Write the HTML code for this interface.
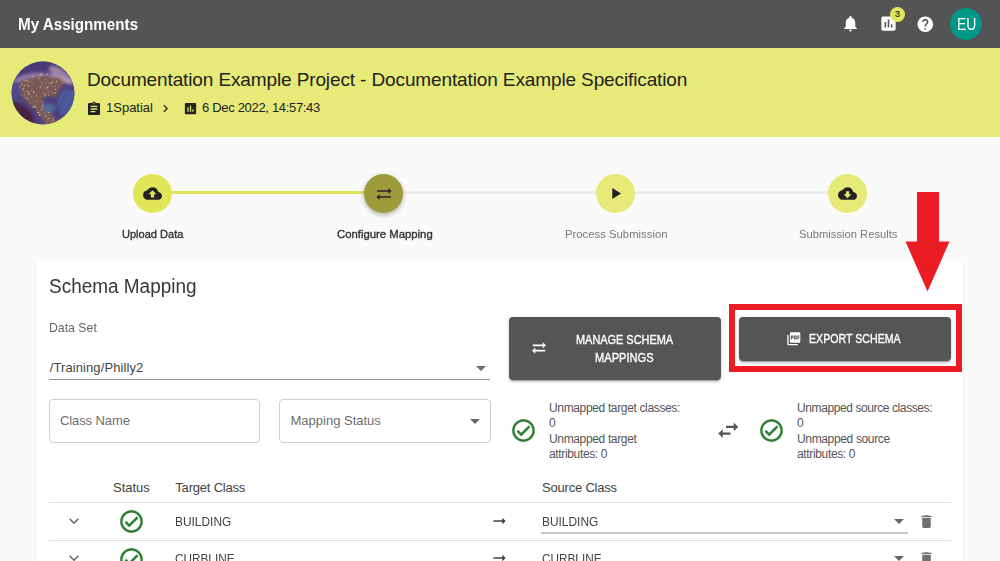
<!DOCTYPE html>
<html><head><meta charset="utf-8">
<style>
*{box-sizing:border-box;margin:0;padding:0}
html,body{width:1000px;height:561px;overflow:hidden;background:#fafafa;font-family:"Liberation Sans",sans-serif;position:relative}
.abs{position:absolute;white-space:nowrap;line-height:1}
svg{display:block}
#top{left:0;top:0;width:1000px;height:48px;background:#545454}
#band{left:0;top:48px;width:1000px;height:88.5px;background:#e6ea78}
#globe{left:11px;top:61px;width:63px;height:63px;border-radius:50%;overflow:hidden;background:radial-gradient(ellipse at 40% 45%,#8a6a5a 0%,#6e4e5e 30%,#4e3a6a 60%,#3a3270 85%,#7a6aa0 100%)}
.step{width:39px;height:39px;border-radius:50%;background:#e6ea78}
.t12{font-size:12px}
.t13{font-size:13px}
.btn{background:#555;border-radius:4px;box-shadow:0 3px 1px -2px rgba(0,0,0,.2),0 2px 2px 0 rgba(0,0,0,.14),0 1px 5px 0 rgba(0,0,0,.12)}
.bt{color:#fff;font-size:12px}
.med{-webkit-text-stroke-width:0.35px;transform-origin:0 0}
.st{font-size:12px;color:#555;letter-spacing:-0.35px}
</style></head><body>
<div id="top" class="abs"></div>
<div class="abs" style="left:17.5px;top:16px;color:#fff;font-size:17px;font-weight:bold;transform:scaleX(0.893);transform-origin:0 0">My Assignments</div>

<!-- top icons -->
<svg class="abs" style="left:841px;top:14px" width="19" height="19" viewBox="0 0 24 24"><path fill="#fff" d="M12 22c1.1 0 2-.9 2-2h-4c0 1.1.89 2 2 2zm6-6v-5c0-3.07-1.64-5.64-4.5-6.32V4c0-.83-.67-1.5-1.5-1.5s-1.5.67-1.5 1.5v.68C7.63 5.36 6 7.92 6 11v5l-2 2v1h16v-1l-2-2z"/></svg>
<svg class="abs" style="left:878.5px;top:13.5px" width="19" height="19" viewBox="0 0 24 24"><path fill="#fff" d="M19 3H5c-1.1 0-2 .9-2 2v14c0 1.1.9 2 2 2h14c1.1 0 2-.9 2-2V5c0-1.1-.9-2-2-2zM9 17H7v-7h2v7zm4 0h-2V7h2v10zm4 0h-2v-4h2v4z"/></svg>
<div class="abs" style="left:890px;top:7px;width:15px;height:15px;border-radius:50%;background:#e2e65c"></div>
<div class="abs" style="left:890px;top:10px;width:15px;text-align:center;font-size:9px;color:#222;-webkit-text-stroke-width:0.2px">3</div>
<svg class="abs" style="left:916.2px;top:14.6px" width="18.6" height="18.6" viewBox="0 0 24 24"><path fill="#fff" d="M12 2C6.48 2 2 6.48 2 12s4.48 10 10 10 10-4.48 10-10S17.52 2 12 2zm1 17h-2v-2h2v2zm2.07-7.750l-.9.92C13.45 12.9 13 13.5 13 15h-2v-.5c0-1.1.45-2.1 1.17-2.83l1.24-1.26c.37-.36.59-.86.59-1.41 0-1.1-.9-2-2-2s-2 .9-2 2H8c0-2.21 1.79-4 4-4s4 1.790 4 4c0 .88-.36 1.68-.93 2.25z"/></svg>
<div class="abs" style="left:950px;top:8px;width:32px;height:32px;border-radius:50%;background:#009688"></div>
<div class="abs" style="left:957px;top:17px;font-size:16px;color:#fff;transform:scaleX(0.87);transform-origin:0 0">EU</div>

<div id="band" class="abs"></div>
<svg class="abs" style="left:11px;top:61px" width="64" height="64" viewBox="0 0 64 64">
<defs><clipPath id="gc"><circle cx="32" cy="32" r="31.5"/></clipPath>
<filter id="gf" x="-50%" y="-50%" width="200%" height="200%"><feGaussianBlur stdDeviation="1.8"/></filter>
<filter id="gf2" x="-50%" y="-50%" width="200%" height="200%"><feGaussianBlur stdDeviation="0.35"/></filter></defs>
<g clip-path="url(#gc)">
<rect width="64" height="64" fill="#4c3f7e"/>
<g filter="url(#gf)">
<ellipse cx="26" cy="2" rx="34" ry="9" fill="#4a3a7a"/>
<path d="M-2 24 Q24 6 62 22" stroke="#9a7aaa" stroke-width="5" fill="none"/>
<ellipse cx="50" cy="14" rx="14" ry="5" transform="rotate(35 50 14)" fill="#c0a0b8" opacity="0.7"/>
<ellipse cx="8" cy="55" rx="18" ry="11" transform="rotate(40 8 55)" fill="#4a2442"/>
<path d="M11 19 L32 14 L49 17 L54 22 L47 30 L45 37 L38 35 L31 38 L34 45 L38 50 L43 55 L45 64 L36 66 L28 54 L23 47 L16 42 L10 34 L8 27Z" fill="#7a5a56"/>
<ellipse cx="57" cy="42" rx="10" ry="14" fill="#4a5898"/>
<ellipse cx="38" cy="47" rx="6" ry="4.5" fill="#4e6a98"/>
<ellipse cx="4" cy="30" rx="5" ry="10" fill="#4e4a8c"/>
</g>
<g filter="url(#gf2)" fill="#f0d098" opacity="0.75"><circle cx="29.3" cy="40.0" r="0.41"/><circle cx="31.9" cy="41.4" r="0.55"/><circle cx="16.7" cy="37.6" r="0.72"/><circle cx="37.6" cy="51.6" r="0.76"/><circle cx="12.4" cy="27.2" r="0.56"/><circle cx="40.6" cy="14.1" r="0.49"/><circle cx="32.8" cy="15.0" r="0.44"/><circle cx="16.9" cy="24.1" r="0.63"/><circle cx="28.7" cy="54.1" r="0.77"/><circle cx="32.4" cy="44.0" r="0.41"/><circle cx="31.5" cy="45.1" r="0.70"/><circle cx="29.5" cy="25.9" r="0.36"/><circle cx="22.8" cy="23.5" r="0.44"/><circle cx="21.6" cy="15.5" r="0.45"/><circle cx="44.0" cy="32.0" r="0.66"/><circle cx="44.6" cy="25.5" r="0.49"/><circle cx="12.1" cy="28.6" r="0.51"/><circle cx="13.5" cy="24.3" r="0.63"/><circle cx="45.5" cy="20.9" r="0.40"/><circle cx="34.3" cy="34.4" r="0.68"/><circle cx="13.5" cy="33.0" r="0.41"/><circle cx="18.0" cy="25.5" r="0.58"/><circle cx="17.9" cy="31.7" r="0.46"/><circle cx="18.0" cy="24.9" r="0.44"/><circle cx="44.3" cy="28.4" r="0.59"/><circle cx="21.9" cy="15.7" r="0.55"/><circle cx="19.4" cy="42.1" r="0.52"/><circle cx="25.5" cy="34.7" r="0.54"/><circle cx="35.0" cy="55.3" r="0.59"/><circle cx="16.6" cy="19.7" r="0.42"/><circle cx="19.7" cy="21.5" r="0.44"/><circle cx="42.8" cy="59.0" r="0.63"/><circle cx="27.8" cy="17.2" r="0.64"/><circle cx="36.0" cy="26.7" r="0.59"/><circle cx="11.2" cy="23.4" r="0.73"/><circle cx="34.3" cy="54.6" r="0.63"/><circle cx="36.9" cy="26.0" r="0.74"/><circle cx="51.1" cy="22.2" r="0.45"/><circle cx="8.8" cy="25.5" r="0.68"/><circle cx="28.9" cy="15.0" r="0.71"/><circle cx="16.3" cy="30.4" r="0.76"/><circle cx="34.9" cy="18.6" r="0.49"/><circle cx="40.9" cy="60.1" r="0.49"/><circle cx="30.7" cy="48.5" r="0.77"/><circle cx="42.6" cy="57.0" r="0.45"/><circle cx="24.5" cy="46.3" r="0.80"/><circle cx="27.6" cy="51.5" r="0.75"/><circle cx="37.4" cy="31.1" r="0.41"/><circle cx="42.2" cy="31.4" r="0.46"/><circle cx="28.7" cy="53.9" r="0.68"/><circle cx="30.6" cy="23.5" r="0.47"/><circle cx="36.9" cy="58.0" r="0.39"/><circle cx="22.1" cy="45.9" r="0.72"/><circle cx="17.5" cy="20.5" r="0.54"/><circle cx="23.4" cy="45.3" r="0.71"/><circle cx="17.3" cy="33.5" r="0.41"/><circle cx="35.4" cy="27.8" r="0.53"/><circle cx="14.4" cy="36.8" r="0.66"/><circle cx="41.4" cy="59.5" r="0.36"/><circle cx="21.0" cy="20.5" r="0.44"/><circle cx="29.2" cy="25.8" r="0.66"/><circle cx="18.1" cy="32.7" r="0.76"/><circle cx="29.4" cy="13.2" r="0.79"/><circle cx="47.0" cy="23.9" r="0.40"/><circle cx="37.6" cy="34.3" r="0.58"/><circle cx="40.2" cy="22.0" r="0.69"/><circle cx="30.3" cy="20.9" r="0.58"/><circle cx="41.6" cy="21.0" r="0.66"/><circle cx="20.8" cy="29.3" r="0.44"/><circle cx="36.9" cy="49.8" r="0.38"/><circle cx="26.5" cy="51.6" r="0.40"/><circle cx="14.1" cy="34.7" r="0.37"/><circle cx="37.4" cy="57.5" r="0.60"/><circle cx="25.7" cy="40.4" r="0.58"/><circle cx="38.6" cy="22.2" r="0.61"/><circle cx="33.2" cy="51.5" r="0.42"/><circle cx="11.9" cy="34.0" r="0.43"/><circle cx="33.9" cy="50.4" r="0.44"/><circle cx="30.9" cy="13.4" r="0.73"/><circle cx="45.6" cy="20.6" r="0.80"/><circle cx="14.6" cy="19.4" r="0.77"/><circle cx="32.3" cy="48.2" r="0.39"/><circle cx="18.4" cy="38.3" r="0.38"/><circle cx="22.6" cy="31.1" r="0.78"/><circle cx="34.9" cy="22.0" r="0.56"/><circle cx="36.4" cy="13.4" r="0.69"/><circle cx="26.8" cy="52.1" r="0.50"/><circle cx="40.5" cy="15.3" r="0.56"/><circle cx="33.3" cy="32.7" r="0.58"/><circle cx="20.7" cy="35.7" r="0.54"/></g>
<g stroke="#f0d0c8" stroke-width="0.35" opacity="0.3" fill="none">
<path d="M34 64 L62 16"/><path d="M44 64 L64 28"/>
</g>
</g></svg>
<div class="abs" style="left:87px;top:70px;font-size:19px;color:#222;letter-spacing:-0.12px">Documentation Example Project - Documentation Example Specification</div>
<svg class="abs" style="left:86px;top:100.7px" width="16" height="16" viewBox="0 0 24 24"><path fill="#222" d="M19 3h-4.18C14.4 1.840 13.3 1 12 1c-1.3 0-2.4.84-2.82 2H5c-1.1 0-2 .9-2 2v14c0 1.1.9 2 2 2h14c1.1 0 2-.9 2-2V5c0-1.1-.9-2-2-2zm-7 0c.55 0 1 .45 1 1s-.45 1-1 1-1-.45-1-1 .45-1 1-1zm2 14H7v-2h7v2zm3-4H7v-2h10v2zm0-4H7V7h10v2z"/></svg>
<div class="abs t13" style="left:106px;top:101px;color:#222">1Spatial</div>
<svg class="abs" style="left:158px;top:101px" width="15" height="15" viewBox="0 0 24 24"><path fill="#222" d="M10 6L8.59 7.41 13.17 12l-4.58 4.59L10 18l6-6z"/></svg>
<svg class="abs" style="left:183px;top:101px" width="15" height="15" viewBox="0 0 24 24"><path fill="#222" d="M19 3H5c-1.1 0-2 .9-2 2v14c0 1.1.9 2 2 2h14c1.1 0 2-.9 2-2V5c0-1.1-.9-2-2-2zM9 17H7v-7h2v7zm4 0h-2V7h2v10zm4 0h-2v-4h2v4z"/></svg>
<div class="abs t13" style="left:202px;top:101px;color:#222;letter-spacing:-0.32px">6 Dec 2022, 14:57:43</div>

<!-- stepper -->
<div class="abs" style="left:152px;top:191px;width:232px;height:3px;background:#e1e658"></div>
<div class="abs" style="left:384px;top:191px;width:463px;height:3px;background:#ebebf0"></div>
<div class="abs step" style="left:133px;top:174px;background:#e1e658"></div>
<svg class="abs" style="left:143px;top:184px" width="19" height="19" viewBox="0 0 24 24"><path fill="#222" d="M19.35 10.04C18.67 6.59 15.64 4 12 4 9.11 4 6.6 5.64 5.35 8.04 2.34 8.36 0 10.91 0 14c0 3.31 2.69 6 6 6h13c2.76 0 5-2.24 5-5 0-2.64-2.05-4.78-4.65-4.96zM14 13v4h-4v-4H7l5-5 5 5h-3z"/></svg>
<div class="abs step" style="left:364px;top:174px;background:#9c9c3c;box-shadow:0 2px 5px rgba(0,0,0,.3)"></div>
<svg class="abs" style="left:375px;top:184.5px" width="18" height="18" viewBox="0 0 24 24"><path fill="#222" d="M18 12l4-4-4-4v3H3v2h15zM6 12l-4 4 4 4v-3h15v-2H6z"/></svg>
<div class="abs step" style="left:596px;top:174px"></div>
<svg class="abs" style="left:605.8px;top:184px" width="19" height="19" viewBox="0 0 24 24"><path fill="#222" d="M8 5v14l11-7z"/></svg>
<div class="abs step" style="left:828px;top:174px"></div>
<svg class="abs" style="left:838px;top:184px" width="19" height="19" viewBox="0 0 24 24"><path fill="#222" d="M19.35 10.04C18.67 6.59 15.64 4 12 4 9.11 4 6.6 5.64 5.35 8.04 2.34 8.36 0 10.91 0 14c0 3.31 2.69 6 6 6h13c2.76 0 5-2.24 5-5 0-2.64-2.05-4.78-4.65-4.96zM17 13l-5 5-5-5h3V9h4v4h3z"/></svg>
<div class="abs med" style="left:121.5px;top:229.3px;font-size:11.5px;color:#333;transform:scaleX(0.96)">Upload Data</div>
<div class="abs med" style="left:336.5px;top:229.3px;font-size:11.5px;color:#333;transform:scaleX(0.985)">Configure Mapping</div>
<div class="abs" style="left:565px;top:229.3px;font-size:11.5px;color:#777;transform:scaleX(0.984);transform-origin:0 0">Process Submission</div>
<div class="abs" style="left:798.5px;top:229.3px;font-size:11.5px;color:#777;transform:scaleX(0.975);transform-origin:0 0">Submission Results</div>

<!-- card -->
<div class="abs" style="left:36px;top:260px;width:927px;height:320px;background:#fff;border-radius:4px;box-shadow:0 2px 1px -1px rgba(0,0,0,.12),0 1px 1px 0 rgba(0,0,0,.08),0 1px 3px 0 rgba(0,0,0,.08)"></div>
<div class="abs" style="left:49px;top:276px;font-size:20px;color:#383838;transform:scaleX(0.948);transform-origin:0 0">Schema Mapping</div>
<div class="abs t13" style="left:49px;top:320.5px;color:#666;transform:scaleX(0.945);transform-origin:0 0">Data Set</div>
<div class="abs t13" style="left:49.7px;top:360.5px;color:#444;letter-spacing:0.1px">/Training/Philly2</div>
<svg class="abs" style="left:469px;top:356px" width="24" height="24" viewBox="0 0 24 24"><path fill="#6a6a6a" d="M7 10l5 5 5-5z"/></svg>
<div class="abs" style="left:49px;top:379px;width:441px;height:1px;background:#939393"></div>

<div class="abs" style="left:49px;top:399px;width:211px;height:44px;border:1px solid #cfcfcf;border-radius:4px"></div>
<div class="abs t13" style="left:60px;top:413.7px;color:#6e6e6e;letter-spacing:-0.1px">Class Name</div>
<div class="abs" style="left:279px;top:399px;width:212px;height:44px;border:1px solid #cfcfcf;border-radius:4px"></div>
<div class="abs t13" style="left:290.5px;top:413.7px;color:#6e6e6e">Mapping Status</div>
<svg class="abs" style="left:463px;top:409px" width="24" height="24" viewBox="0 0 24 24"><path fill="#666" d="M7 10l5 5 5-5z"/></svg>

<div class="abs btn" style="left:509px;top:317px;width:212px;height:63px"></div>
<svg class="abs" style="left:531px;top:340.4px" width="16" height="16" viewBox="0 0 24 24"><path fill="#fff" stroke="#fff" stroke-width="0.7" d="M18 12l4-4-4-4v3H3v2h15zM6 12l-4 4 4 4v-3h15v-2H6z"/></svg>
<div class="abs bt med" style="left:576px;top:333.5px;transform:scaleX(0.91)">MANAGE SCHEMA</div>
<div class="abs bt med" style="left:595px;top:351.7px;transform:scaleX(0.925)">MAPPINGS</div>

<div class="abs btn" style="left:739px;top:317px;width:211.5px;height:43.5px"></div>
<svg class="abs" style="left:786.3px;top:330.6px" width="15.6" height="15.6" viewBox="0 0 24 24"><path fill="#fff" d="M20 2H8c-1.1 0-2 .9-2 2v12c0 1.1.9 2 2 2h12c1.1 0 2-.9 2-2V4c0-1.1-.9-2-2-2zm-8.5 7.5c0 .83-.67 1.5-1.5 1.5H9v2H7.5V7H10c.83 0 1.5.67 1.5 1.5v1zm5 2c0 .83-.67 1.5-1.5 1.5h-2.5V7H15c.83 0 1.5.67 1.5 1.5v3zm4-3H19v1h1.5V11H19v2h-1.5V7h3v1.5zM9 9.5h1v-1H9v1zM4 6H2v14c0 1.1.9 2 2 2h14v-2H4V6zm10 5.5h1v-3h-1v3z"/></svg>
<div class="abs bt med" style="left:809px;top:333.3px;transform:scaleX(0.885)">EXPORT SCHEMA</div>

<!-- red highlight -->
<div class="abs" style="left:729px;top:304px;width:233px;height:68px;border:6px solid #ec1c24"></div>
<svg class="abs" style="left:900px;top:185px" width="60" height="110" viewBox="900 185 60 110"><path fill="#ec1c24" d="M917 192H939V241.5H949.5L927.5 291.5L905.5 241.5H917Z"/></svg>

<!-- stats -->
<svg class="abs" style="left:509.5px;top:416.5px" width="27" height="27" viewBox="0 0 24 24"><path fill="#2e7d32" stroke="#2e7d32" stroke-width="0.25" d="M12 2C6.5 2 2 6.5 2 12s4.5 10 10 10 10-4.5 10-10S17.5 2 12 2zm0 18c-4.41 0-8-3.59-8-8s3.59-8 8-8 8 3.59 8 8-3.59 8-8 8zm4.59-12.42L10 14.17l-2.59-2.58L6 13l4 4 8-8z"/></svg>
<div class="abs st" style="left:549px;top:401.5px">Unmapped target classes:</div>
<div class="abs st" style="left:549px;top:417px">0</div>
<div class="abs st" style="left:549px;top:433px">Unmapped target</div>
<div class="abs st" style="left:549px;top:448px">attributes: 0</div>
<svg class="abs" style="left:714.6px;top:416.6px" width="26.5" height="26.5" viewBox="0 0 24 24"><path fill="#555" d="M6.99 11L3 15l3.99 4v-3H14v-2H6.99v-3zM21 9l-3.99-4v3H10v2h7.01v3L21 9z"/></svg>
<svg class="abs" style="left:757.5px;top:417px" width="27" height="27" viewBox="0 0 24 24"><path fill="#2e7d32" stroke="#2e7d32" stroke-width="0.25" d="M12 2C6.5 2 2 6.5 2 12s4.5 10 10 10 10-4.5 10-10S17.5 2 12 2zm0 18c-4.41 0-8-3.59-8-8s3.59-8 8-8 8 3.59 8 8-3.59 8-8 8zm4.59-12.42L10 14.17l-2.59-2.58L6 13l4 4 8-8z"/></svg>
<div class="abs st" style="left:797px;top:401.5px;letter-spacing:-0.4px">Unmapped source classes:</div>
<div class="abs st" style="left:797px;top:417px">0</div>
<div class="abs st" style="left:797px;top:433px">Unmapped source</div>
<div class="abs st" style="left:797px;top:448px">attributes: 0</div>

<!-- table -->
<div class="abs t13" style="left:113px;top:481.3px;color:#424242">Status</div>
<div class="abs t13" style="left:175.3px;top:481.3px;color:#424242;letter-spacing:-0.2px">Target Class</div>
<div class="abs t13" style="left:542px;top:481.3px;color:#424242;letter-spacing:-0.2px">Source Class</div>
<div class="abs" style="left:49px;top:502px;width:902px;height:1px;background:#e0e0e0"></div>

<svg class="abs" style="left:64.3px;top:511.3px" width="20" height="20" viewBox="0 0 24 24"><path fill="#707070" d="M16.59 8.59L12 13.17 7.41 8.59 6 10l6 6 6-6z"/></svg>
<svg class="abs" style="left:118px;top:507.7px" width="27" height="27" viewBox="0 0 24 24"><path fill="#2e7d32" stroke="#2e7d32" stroke-width="0.25" d="M12 2C6.5 2 2 6.5 2 12s4.5 10 10 10 10-4.5 10-10S17.5 2 12 2zm0 18c-4.41 0-8-3.59-8-8s3.59-8 8-8 8 3.59 8 8-3.59 8-8 8zm4.59-12.42L10 14.17l-2.59-2.58L6 13l4 4 8-8z"/></svg>
<div class="abs t13" style="left:175px;top:514.5px;color:#424242;transform:scaleX(0.917);transform-origin:0 0">BUILDING</div>
<svg class="abs" style="left:489px;top:511px" width="20" height="20" viewBox="0 0 24 24"><path fill="#3e3e3e" d="M16.01 11H5.4v2h10.61v3L20 12l-3.99-4z"/></svg>
<div class="abs t13" style="left:542px;top:514.5px;color:#424242;transform:scaleX(0.917);transform-origin:0 0">BUILDING</div>
<div class="abs" style="left:541px;top:532px;width:367px;height:2px;background:#c8c8c8"></div>
<svg class="abs" style="left:887px;top:509px" width="24" height="24" viewBox="0 0 24 24"><path fill="#666" d="M7 10l5 5 5-5z"/></svg>
<svg class="abs" style="left:918px;top:513px" width="17" height="17" viewBox="0 0 24 24"><path fill="#707070" d="M6 19c0 1.1.9 2 2 2h8c1.1 0 2-.9 2-2V7H6v12zM19 4h-3.5l-1-1h-5l-1 1H5v2h14V4z"/></svg>
<div class="abs" style="left:49px;top:540px;width:902px;height:1px;background:#e0e0e0"></div>

<svg class="abs" style="left:64.3px;top:548.3px" width="20" height="20" viewBox="0 0 24 24"><path fill="#707070" d="M16.59 8.59L12 13.17 7.41 8.59 6 10l6 6 6-6z"/></svg>
<svg class="abs" style="left:118px;top:545.5px" width="27" height="27" viewBox="0 0 24 24"><path fill="#2e7d32" stroke="#2e7d32" stroke-width="0.25" d="M12 2C6.5 2 2 6.5 2 12s4.5 10 10 10 10-4.5 10-10S17.5 2 12 2zm0 18c-4.41 0-8-3.59-8-8s3.59-8 8-8 8 3.59 8 8-3.59 8-8 8zm4.59-12.42L10 14.17l-2.59-2.58L6 13l4 4 8-8z"/></svg>
<div class="abs t13" style="left:175px;top:551.5px;color:#424242;transform:scaleX(0.906);transform-origin:0 0">CURBLINE</div>
<svg class="abs" style="left:489px;top:548px" width="20" height="20" viewBox="0 0 24 24"><path fill="#3e3e3e" d="M16.01 11H5.4v2h10.61v3L20 12l-3.99-4z"/></svg>
<div class="abs t13" style="left:542px;top:551.5px;color:#424242;transform:scaleX(0.906);transform-origin:0 0">CURBLINE</div>
<svg class="abs" style="left:887px;top:546px" width="24" height="24" viewBox="0 0 24 24"><path fill="#666" d="M7 10l5 5 5-5z"/></svg>
<svg class="abs" style="left:918px;top:550px" width="17" height="17" viewBox="0 0 24 24"><path fill="#707070" d="M6 19c0 1.1.9 2 2 2h8c1.1 0 2-.9 2-2V7H6v12zM19 4h-3.5l-1-1h-5l-1 1H5v2h14V4z"/></svg>

</body></html>
